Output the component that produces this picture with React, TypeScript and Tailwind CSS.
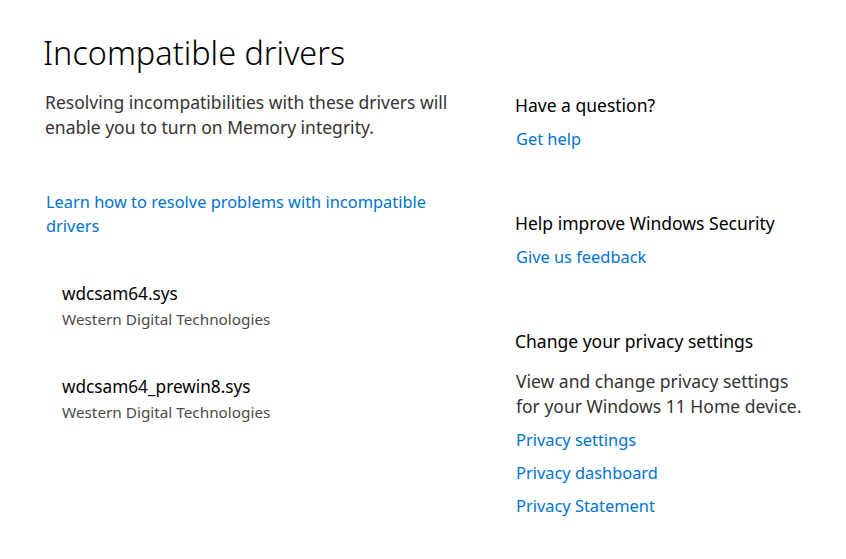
const link = 'block text-[#0073cf] text-[16.4px] hover:underline';

function Driver({ name, vendor }: { name: string; vendor: string }) {
  return (
    <div>
      <div className="text-[17.2px] leading-[24px] text-black">{name}</div>
      <div className="mt-[2px] text-[15.3px] leading-[22px] text-[#4a4a4a]">{vendor}</div>
    </div>
  );
}

export default function App() {
  return (
    <div className="h-[559px] w-[846px] overflow-hidden bg-white font-['Noto_Sans',sans-serif] text-[17.5px]">
      <div className="flex pl-[43px]">
        <div className="w-[472px] shrink-0">
          <h1 className="pt-[32px] text-[32.4px] font-light leading-[40px] text-black">Incompatible drivers</h1>
          <p className="mt-[18px] pl-[2px] leading-[25px] text-[#333]">
            Resolving incompatibilities with these drivers will
            <br />
            enable you to turn on Memory integrity.
          </p>
          <a href="#" className={`${link} mt-[50px] pl-[3px] leading-[24px]`}>
            Learn how to resolve problems with incompatible
            <br />
            drivers
          </a>
          <div className="mt-[44px] flex flex-col gap-[45px] pl-[19px]">
            <Driver name="wdcsam64.sys" vendor="Western Digital Technologies" />
            <Driver name="wdcsam64_prewin8.sys" vendor="Western Digital Technologies" />
          </div>
        </div>

        <div className="pt-[93px] leading-[24px]">
          <h2 className="text-black">Have a question?</h2>
          <a href="#" className={`${link} mt-[10px] pl-px`}>Get help</a>

          <h2 className="mt-[60px] text-black">Help improve Windows Security</h2>
          <a href="#" className={`${link} mt-[10px] pl-px`}>Give us feedback</a>

          <h2 className="mt-[60px] text-black">Change your privacy settings</h2>
          <p className="mt-[16px] pl-px leading-[25px] text-[#333]">
            View and change privacy settings
            <br />
            for your Windows 11 Home device.
          </p>
          <div className="mt-[9px] flex flex-col gap-[9px] pl-px">
            <a href="#" className={link}>Privacy settings</a>
            <a href="#" className={link}>Privacy dashboard</a>
            <a href="#" className={link}>Privacy Statement</a>
          </div>
        </div>
      </div>
    </div>
  );
}
